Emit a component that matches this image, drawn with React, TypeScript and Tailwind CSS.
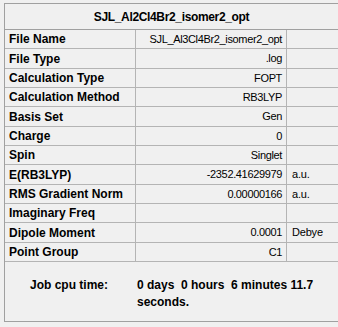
import React from 'react';

interface Row {
  label: string;
  value: string;
  unit?: string;
  tall?: boolean;
}

const rows: Row[] = [
  { label: 'File Name', value: 'SJL_Al3Cl4Br2_isomer2_opt' },
  { label: 'File Type', value: '.log', tall: true },
  { label: 'Calculation Type', value: 'FOPT' },
  { label: 'Calculation Method', value: 'RB3LYP' },
  { label: 'Basis Set', value: 'Gen', tall: true },
  { label: 'Charge', value: '0' },
  { label: 'Spin', value: 'Singlet' },
  { label: 'E(RB3LYP)', value: '-2352.41629979', unit: 'a.u.', tall: true },
  { label: 'RMS Gradient Norm', value: '0.00000166', unit: 'a.u.' },
  { label: 'Imaginary Freq', value: '' },
  { label: 'Dipole Moment', value: '0.0001', unit: 'Debye', tall: true },
  { label: 'Point Group', value: 'C1' },
];

const App: React.FC = () => {
  return (
    <div
      className="w-[338px] h-[327px] bg-[#f0f0f0] pt-[3px] pl-[4px] overflow-hidden text-black"
      style={{ fontFamily: '"Liberation Sans", Arial, sans-serif' }}
    >
      <div className="h-[319px] border-l border-t border-b border-[#a0a0a0]">
        {/* Title */}
        <div className="h-[26px] border-b border-[#a0a0a0] flex items-center justify-center text-[12px] font-bold tracking-[-0.35px]">
          SJL_Al2Cl4Br2_isomer2_opt
        </div>

        {/* Property rows */}
        {rows.map((r) => (
          <div
            key={r.label}
            className={`grid grid-cols-[131px_151px_1fr] border-b border-[#b4b4b4] ${r.tall ? 'h-[20px]' : 'h-[19px]'}`}
          >
            <div className="border-r border-[#b4b4b4] pl-[4px] flex items-center text-[12px] font-bold whitespace-nowrap">
              {r.label}
            </div>
            <div className="border-r border-[#b4b4b4] pr-[4px] flex items-center justify-end text-[11px] tracking-[-0.35px] whitespace-nowrap">
              {r.value}
            </div>
            <div className="pl-[5px] flex items-center text-[11px] tracking-[-0.2px] whitespace-nowrap">
              {r.unit}
            </div>
          </div>
        ))}

        {/* Job cpu time */}
        <div className="flex pl-[25px] pt-[15px] text-[12px] font-bold leading-[17px]">
          <div className="w-[107px] shrink-0">Job cpu time:</div>
          <div className="flex-1 whitespace-pre-wrap">0 days  0 hours  6 minutes 11.7 seconds.</div>
        </div>
      </div>
    </div>
  );
};

export default App;
